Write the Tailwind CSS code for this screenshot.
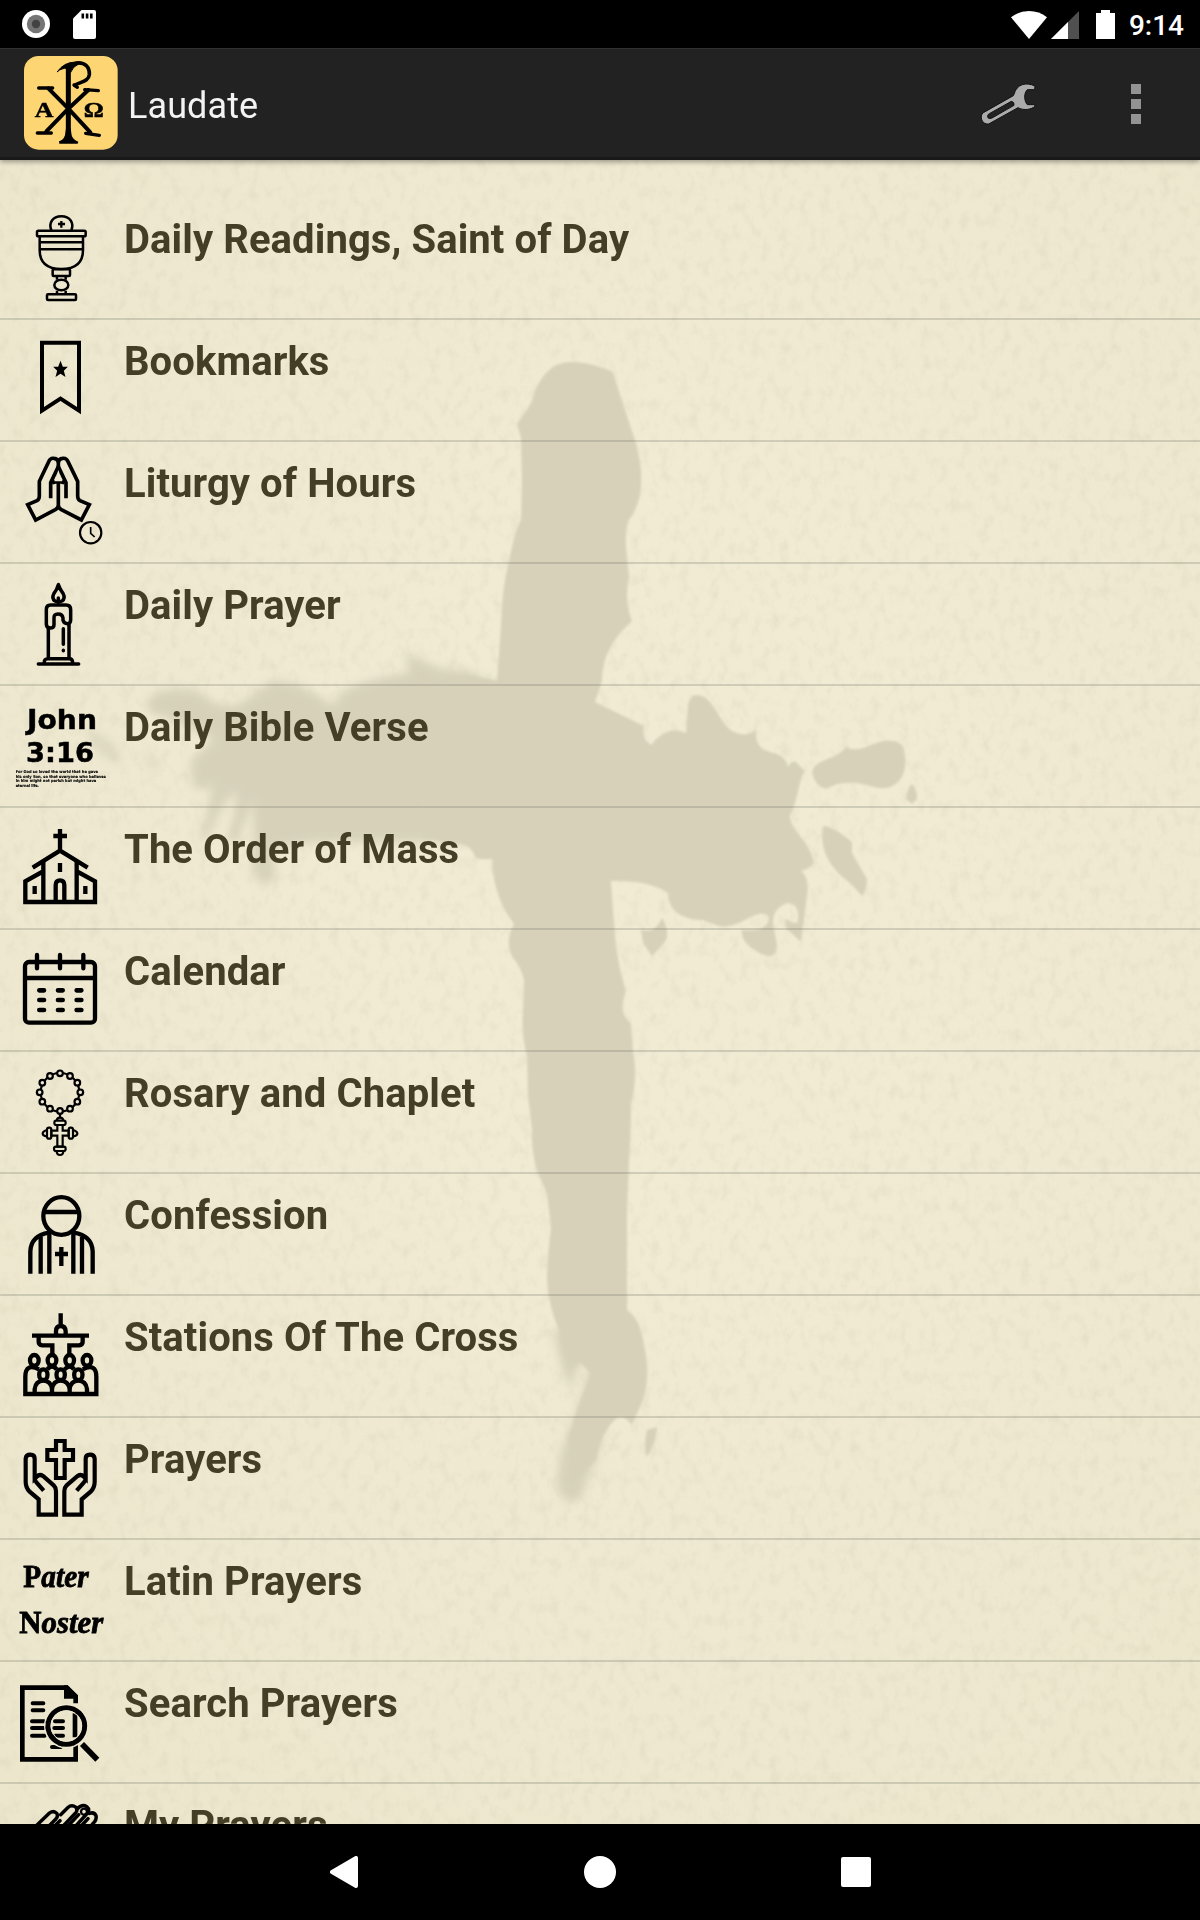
<!DOCTYPE html>
<html lang="en">
<head>
    <meta charset="UTF-8">
    <meta name="viewport" content="width=device-width, initial-scale=1.0">
    <title>Laudate</title>
    <script src="https://cdn.jsdelivr.net/npm/@tailwindcss/browser@4"></script>
</head>
<body class="bg-black font-[Roboto,sans-serif]">
<div class="w-[1200px] h-[1920px] flex flex-col overflow-hidden">

    <!-- Status bar -->
    <div class="h-12 shrink-0 bg-black text-white flex items-center pl-[22px] pr-4">
        <svg class="w-7 h-7" viewBox="0 0 28 28"><circle cx="14" cy="14" r="14" fill="#fff"/><circle cx="14" cy="14" r="9.2" fill="#757575"/><circle cx="14" cy="14" r="4.2" fill="#424242"/></svg>
        <svg class="w-[23px] h-[29px] ml-[23px]" viewBox="0 0 23 29"><path d="M8.5 0H21q2 0 2 2v25q0 2-2 2H2q-2 0-2-2V8.500z" fill="#fff"/><path d="M8.500 3.500h2.600v5H8.500zM12.800 3.500h2.600v5h-2.600zM17 3.500h2.600v5H17z"/></svg>
        <div class="ml-auto flex items-center">
            <svg class="w-9 h-7 mt-px" viewBox="0 0 36 28"><path d="M0 6.300Q8 0 18 0t18 6.300L18 28z" fill="#fff"/></svg>
            <svg class="w-7 h-7 ml-1 mt-px" viewBox="0 0 28 28"><path d="M28 0v28H0z" fill="#505050"/><path d="M17 11v17H0z" fill="#fff"/></svg>
            <svg class="w-[19px] h-[29px] ml-[17px]" viewBox="0 0 19 29"><path d="M5 0h9v3h5v26H0V3h5z" fill="#fff"/></svg>
            <span class="ml-3.5 mt-[3px] text-[28px] leading-8 font-medium">9:14</span>
        </div>
    </div>

    <!-- Action bar -->
    <header class="relative z-10 h-28 shrink-0 bg-[#222] border-t border-t-[#303030] border-b-3 border-b-[#181818] shadow-[0_2px_5px_rgba(0,0,0,0.35)] flex items-center pl-6 pr-[59px]">
        <svg class="w-[94px] h-[94px]" viewBox="72 168 282 282">
            <rect x="72" y="168" width="281" height="281" rx="44" fill="#fdd673"/>
            <g fill="none" stroke="#000" stroke-linecap="round">
                <path d="M205 206V410" stroke-width="15"/>
                <path d="M180 209Q194 201 207 207L212 217Q219 199 236 192L228 186Q192 186 172 215z" fill="#000" stroke-width="3"/>
                <path d="M229 189C257 186 269 203 268 224C266 245 242 245 224 256" stroke-width="11"/>
                <path d="M222 255l10 7" stroke-width="10"/>
                <path d="M205 326L145 265M205 326L265 270" stroke-width="12"/>
                <path d="M205 326L139 394M205 326L271 397" stroke-width="12"/>
                <path d="M116 264h42M254 269l41 3" stroke-width="10"/>
                <path d="M112 399h42M257 400l41 6" stroke-width="10"/>
            </g>
            <path d="M198 385L195 406Q190 421 177 424L178 431H233L235 425Q218 419 215 406L212 385z"/>
            <text x="104" y="350" font-family="Liberation Serif, serif" font-weight="bold" font-size="66" textLength="56" lengthAdjust="spacingAndGlyphs" stroke="#000" stroke-width="1.500">A</text>
            <text x="251" y="350" font-family="Liberation Serif, serif" font-weight="bold" font-size="62" textLength="60" lengthAdjust="spacingAndGlyphs" stroke="#000" stroke-width="1.500">Ω</text>
        </svg>
        <h1 class="ml-[10px] mt-[5px] text-[36px] leading-[42px] tracking-[0.1px] text-[#f3f3f3]">Laudate</h1>
        <svg class="w-[57px] h-[45px] ml-auto mt-0.5" viewBox="240 245 171 135">
            <path d="M405 257C380 245 350 250 342 282L340 286L250 337C238 345 244 374 266 371L354 322C372 332 395 327 405 318L404 313H382C372 303 371 278 382 268H404z" fill="#ababab" stroke="#111" stroke-width="3"/>
            <path d="M334 303Q344 305 342 315L276 353Q262 358 263 346Q263 343 268 340z" fill="#222" stroke="#111" stroke-width="3"/>
        </svg>
        <div class="ml-[94px] mt-0.5 flex flex-col gap-[5px]">
            <span class="w-2.5 h-2.5 bg-[#939393]"></span>
            <span class="w-2.5 h-2.5 bg-[#939393]"></span>
            <span class="w-2.5 h-2.5 bg-[#939393]"></span>
        </div>
    </header>

    <main class="relative h-[1664px] shrink-0 overflow-hidden bg-[#efe9d1]">
        <!-- Paper with the painted cross -->
        <svg class="absolute inset-0 w-[1200px] h-[1664px]" viewBox="0 160 1200 1664">
            <defs>
                <radialGradient id="paper" cx="55%" cy="42%" r="75%">
                    <stop offset="0.3" stop-color="#f1ebd4"/>
                    <stop offset="1" stop-color="#ece6cd"/>
                </radialGradient>
                <filter id="grain" x="0" y="0" width="100%" height="100%">
                    <feTurbulence type="fractalNoise" baseFrequency="0.1 0.07" numOctaves="4" seed="7"/>
                    <feColorMatrix values="0 0 0 0 0.45  0 0 0 0 0.42  0 0 0 0 0.3  0.9 0 0 0 -0.42"/>
                </filter>
                <filter id="edge"><feGaussianBlur stdDeviation="1.2"/></filter>
                <filter id="smear" x="-20%" y="-20%" width="140%" height="140%"><feGaussianBlur stdDeviation="5"/></filter>
            </defs>
            <rect y="160" width="1200" height="1664" fill="url(#paper)"/>
            <rect y="160" width="1200" height="1664" filter="url(#grain)" opacity="0.36"/>
            <g fill="#d7d1ba">
                <g filter="url(#smear)">
                    <path d="M530 676L495 683L467 671L439 668L404 652L410 672L370 680L344 690L333 705L300 685L274 680L236 706L215 704Q195 684 165 690Q140 698 150 712Q180 722 214 738L190 762L194 790L212 786L207 815L199 838L206 840L226 800L236 790L234 815L228 840L238 842L252 800L254 840L252 870L262 886L276 878L272 848L316 842H530z"/>
                    <path d="M84 730Q118 735 122 764Q100 762 84 730z" opacity="0.7"/>
                    <path d="M140 752l22 10l-8 10z" opacity="0.6"/>
                    <path d="M553 1330L563 1372L572 1390L578 1364L592 1362L577 1412L560 1455L557 1490L567 1502L580 1500L595 1460L602 1439L600 1330z"/>
                </g>
                <g filter="url(#edge)">
                    <path d="M546 373Q556 361 574 362Q594 363 613 372L622 401L633 434Q639 450 641 471Q643 502 629 520Q625 530 626 547L629 577Q624 602 632 621C612 640 603 655 602 681L595 702L644 726Q641 738 651 745Q668 724 686 733L688 704Q692 690 706 698C718 709 722 726 734 732Q748 738 756 729Q754 748 770 752Q786 755 788 767Q793 758 798 764L805 771C797 783 800 795 790 816C791 832 808 838 814 862Q812 868 801 871Q810 878 807 896L801 942L787 929Q784 920 786 919Q794 925 798 922Q800 904 788 903Q772 908 773 924L777 944Q777 958 767 956C755 952 740 942 742 930Q768 932 769 918Q765 909 747 919Q727 930 716 925L703 920C684 920 668 912 668 893Q650 880 611 881L614 924Q617 965 626 990Q620 1010 625 1016L631 1024L633 1051Q638 1078 631 1104Q631 1135 629 1161L627 1210V1310Q640 1318 644 1345Q651 1375 643 1400L632 1425Q625 1415 617 1418Q600 1432 596 1460L580 1475L568 1440L577 1410L591 1374L580 1362L570 1368L557 1325Q547 1300 547 1275Q548 1250 551 1227L547 1194L537 1171Q531 1150 532 1130L528 1096L527 1055Q521 1035 523 1010L524 980Q521 967 513 958Q504 941 514 924L505 911Q492 885 492 859Q480 860 476 858Q471 846 462 844Q445 842 422 837V690L467 675L497 681L501 626Q502 590 508 565Q515 530 521 520L522 483L521 438L517 424Q527 410 532 401Q536 384 546 373z"/>
                    <path d="M812 773C814 758 834 762 846 747Q855 752 868 746C886 738 902 739 904 750Q909 772 897 783C880 796 868 781 849 783Q838 782 826 789Q815 786 812 773z"/>
                    <path d="M912 784Q918 792 917 799L912 804L906 799Q907 788 912 784z"/>
                    <path d="M823 826Q833 826 852 842V853L867 879Q867 890 862 896Q852 884 840 875Q818 853 823 826z"/>
                    <path d="M641 930Q655 934 662 918Q668 926 667 938Q664 944 652 956Q645 946 643 943z"/>
                    <path d="M647 1430L657 1427Q656 1443 647 1457Q643 1447 647 1430z"/>
                </g>
            </g>
        </svg>

        <ul class="relative pt-[38px] text-[40px] leading-[48px] tracking-[0.09px] font-bold text-[#453e26]">
            <li class="h-[122px] flex border-b-2 border-[#6b6f60]/25">
                <svg class="w-[120px] h-[120px] shrink-0" viewBox="0 24 360 360" fill="none" stroke="#000" stroke-width="7.500" stroke-linejoin="round">
                    <path d="M154 121C145 99 158 79 184 79S223 99 214 121"/>
                    <path d="M184 93v20M174 102h21" stroke-width="7"/>
                    <rect x="111" y="122" width="146" height="17" rx="4"/>
                    <path d="M119 140V180Q119 237 184 237T249 180V140M120 157H248M120 178H248"/>
                    <rect x="158" y="238" width="52" height="20" rx="3"/>
                    <path d="M171 259v10M197 259v10M171 302v10M197 302v10"/>
                    <ellipse cx="184" cy="285" rx="21" ry="16"/>
                    <rect x="141" y="313" width="87" height="17" rx="3"/>
                </svg>
                <span class="ml-1 mt-[18px]">Daily Readings, Saint of Day</span>
            </li>
            <li class="h-[122px] flex border-b-2 border-[#6b6f60]/25">
                <svg class="w-[120px] h-[120px] shrink-0" viewBox="0 390 360 360">
                    <path d="M126 458H237V662L181.500 626L126 662z" fill="none" stroke="#000" stroke-width="12"/>
                    <path d="M181.500 512l7 18h15l-12 12 5 19-15-10-15 10 5-19-12-12h15z"/>
                </svg>
                <span class="ml-1 mt-[18px]">Bookmarks</span>
            </li>
            <li class="h-[122px] flex border-b-2 border-[#6b6f60]/25">
                <svg class="w-[120px] h-[120px] shrink-0" viewBox="0 6 360 360" fill="none" stroke="#000" stroke-width="11">
                    <path d="M175 62V195Q175 204 166 209L107 240L83 194L111 182Q118 178 118 168V124L146 65Q151 53 162 55Q174 56 175 68Q176 56 188 55Q199 53 204 65L233 124V168Q233 178 240 182L268 194L244 240L184 209Q175 204 175 195"/>
                    <path d="M175 80L152 128V175M175 80L198 128V175M157 128Q175 122 193 128"/>
                    <path d="M175 90L163 124H187z" fill="#eee8d0" stroke="none"/>
                    <circle cx="272" cy="278" r="32" stroke-width="6.500"/>
                    <path d="M272 261V280L284 291" stroke-width="5"/>
                </svg>
                <span class="ml-1 mt-[18px]">Liturgy of Hours</span>
            </li>
            <li class="h-[122px] flex border-b-2 border-[#6b6f60]/25">
                <svg class="w-[120px] h-[120px] shrink-0" viewBox="0 372 360 360" fill="none" stroke="#000" stroke-width="10.500" stroke-linecap="round" stroke-linejoin="round">
                    <path d="M175 434Q171 449 162 460Q154 476 165 483Q175 488 186 483Q197 476 189 460Q180 449 175 434zM175 474v14"/>
                    <path d="M152 495H198Q212 495 212 509V540Q212 551 202 551T189 541V534Q187 522 174 522T162 534V554Q162 564 151 564T139 553V509Q139 495 152 495z"/>
                    <path d="M145 566V654M207 553V654M190 566V613M190 631v1M133 668Q132 656 144 656H208Q218 656 218 668M115 672H236"/>
                </svg>
                <span class="ml-1 mt-[18px]">Daily Prayer</span>
            </li>
            <li class="h-[122px] flex border-b-2 border-[#6b6f60]/25">
                <svg class="w-[120px] h-[120px] shrink-0" viewBox="0 18 360 360" font-family="DejaVu Sans, sans-serif" font-weight="bold">
                    <g font-size="81" stroke="#000" stroke-width="1.500">
                        <text x="81" y="146" textLength="210" lengthAdjust="spacingAndGlyphs">John</text>
                        <text x="78" y="245" textLength="204" lengthAdjust="spacingAndGlyphs">3:16</text>
                    </g>
                    <g font-size="11.500" stroke="#000" stroke-width="0.400">
                        <text x="47" y="280" textLength="247" lengthAdjust="spacingAndGlyphs">For God so loved the world that he gave</text>
                        <text x="47" y="294" textLength="271" lengthAdjust="spacingAndGlyphs">his only Son, so that everyone who believes</text>
                        <text x="47" y="307" textLength="242" lengthAdjust="spacingAndGlyphs">in him might not perish but might have</text>
                        <text x="47" y="321" textLength="70" lengthAdjust="spacingAndGlyphs">eternal life.</text>
                    </g>
                </svg>
                <span class="ml-1 mt-[18px]">Daily Bible Verse</span>
            </li>
            <li class="h-[122px] flex border-b-2 border-[#6b6f60]/25">
                <svg class="w-[120px] h-[120px] shrink-0" viewBox="0 384 360 360" fill="none" stroke="#000" stroke-width="13">
                    <path d="M180 447V512M160 468H201M98 563L180 512L263 563"/>
                    <path d="M130 543V666M230 543V666M126 576L76 604V666H285V604L234 576"/>
                    <path d="M167 664V616Q167 601 180 601T193 616V664M180 549V576M104 618V642M256 618V642"/>
                </svg>
                <span class="ml-1 mt-[18px]">The Order of Mass</span>
            </li>
            <li class="h-[122px] flex border-b-2 border-[#6b6f60]/25">
                <svg class="w-[120px] h-[120px] shrink-0" viewBox="0 0 360 360" fill="none" stroke="#000" stroke-width="13" stroke-linecap="round">
                    <rect x="75" y="96" width="210" height="182" rx="12"/>
                    <path d="M76 144H284M111 75V115M180 75V115M250 75V115"/>
                    <path d="M118 181h14M174 181h14M230 181h14M118 210h14M174 210h14M230 210h14M118 240h14M174 240h14M230 240h14" stroke-width="14"/>
                </svg>
                <span class="ml-1 mt-[18px]">Calendar</span>
            </li>
            <li class="h-[122px] flex border-b-2 border-[#6b6f60]/25">
                <svg class="w-[120px] h-[120px] shrink-0" viewBox="0 366 360 360" fill="none" stroke="#000" stroke-width="6.500">
                    <circle cx="180" cy="487" r="58"/>
                    <g fill="#eee8d0">
                        <circle cx="180" cy="430" r="8.500"/><circle cx="210" cy="438" r="8.500"/><circle cx="232" cy="458" r="8.500"/><circle cx="241" cy="487" r="8.500"/>
                        <circle cx="232" cy="515" r="8.500"/><circle cx="210" cy="536" r="8.500"/><circle cx="180" cy="543" r="8.500"/><circle cx="150" cy="536" r="8.500"/>
                        <circle cx="127" cy="515" r="8.500"/><circle cx="119" cy="487" r="8.500"/><circle cx="127" cy="458" r="8.500"/><circle cx="150" cy="438" r="8.500"/>
                    </g>
                    <path d="M180 552v12M170 572Q171 563 180 563T190 572"/>
                    <rect x="163" y="572" width="34" height="13" rx="6"/>
                    <path d="M172 586V602H154V617H172V650H188V617H206V602H188V586"/>
                    <rect x="141" y="593" width="13" height="33" rx="6"/><rect x="206" y="593" width="13" height="33" rx="6"/>
                    <path d="M141 600Q129 603 128 610T141 619M219 600Q231 603 232 610T219 619"/>
                    <rect x="162" y="650" width="35" height="13" rx="6"/>
                    <path d="M170 663Q170 675 180 675T190 663"/>
                </svg>
                <span class="ml-1 mt-[18px]">Rosary and Chaplet</span>
            </li>
            <li class="h-[122px] flex border-b-2 border-[#6b6f60]/25">
                <svg class="w-[120px] h-[120px] shrink-0" viewBox="0 12 360 360" fill="none" stroke="#000" stroke-width="13">
                    <ellipse cx="184" cy="138" rx="54" ry="56.500"/>
                    <path d="M131 126H237M91 311V244Q93 197 147 188M278 311V244Q276 197 221 188"/>
                    <path d="M122 200V311M148 185V311M220 185V311M246 200V311M184 231V288M165 252H204"/>
                </svg>
                <span class="ml-1 mt-[18px]">Confession</span>
            </li>
            <li class="h-[122px] flex border-b-2 border-[#6b6f60]/25">
                <svg class="w-[120px] h-[120px] shrink-0" viewBox="0 378 360 360" fill="none" stroke="#000" stroke-width="13">
                    <path d="M182 430V468M96 497H267M168 494V484Q168 468 182 468T197 484V494M116 503V515Q116 525 127 526H157V552M248 503V515Q248 525 237 526H208V552"/>
                    <ellipse cx="103" cy="571" rx="13" ry="16"/><ellipse cx="156" cy="571" rx="13" ry="16"/><ellipse cx="209" cy="571" rx="13" ry="16"/><ellipse cx="261" cy="571" rx="13" ry="16"/>
                    <ellipse cx="130" cy="614" rx="12.500" ry="16"/><ellipse cx="182" cy="614" rx="12.500" ry="16"/><ellipse cx="235" cy="614" rx="12.500" ry="16"/>
                    <path d="M117 598Q76 578 76 620V672H289V620Q289 578 248 598M142 598Q156 581 170 598M194 598Q209 581 222 598"/>
                    <path d="M104 668V658Q107 632 130 632T156 658V668V658Q159 632 182 632T209 658V668V658Q212 632 235 632T261 658V668"/>
                </svg>
                <span class="ml-1 mt-[18px]">Stations Of The Cross</span>
            </li>
            <li class="h-[122px] flex border-b-2 border-[#6b6f60]/25">
                <svg class="w-[120px] h-[120px] shrink-0" viewBox="0 24 360 360" fill="none" stroke="#000" stroke-width="12.500">
                    <path d="M168 93H194V120H219V150H194V204H168V150H142V120H168z"/>
                    <path d="M116 314H168V243Q168 233 161 226L129 198Q119 191 110 200L104 206V146Q104 134 91 134T77 146V215Q77 233 89 245L116 268zM104 204Q104 212 110 218L131 242"/>
                    <path d="M245 314H193V243Q193 233 200 226L233 198Q243 191 251 200L257 206V146Q257 134 270 134T284 146V215Q284 233 272 245L245 268zM257 204Q257 212 251 218L230 242"/>
                </svg>
                <span class="ml-1 mt-[18px]">Prayers</span>
            </li>
            <li class="h-[122px] flex border-b-2 border-[#6b6f60]/25">
                <svg class="w-[120px] h-[120px] shrink-0" viewBox="0 390 360 360" font-family="Liberation Serif, serif" font-size="96" stroke="#000" stroke-width="2.500">
                    <text x="70" y="532" textLength="196" lengthAdjust="spacingAndGlyphs">P<tspan font-style="italic">ater</tspan></text>
                    <text x="58" y="670" textLength="252" lengthAdjust="spacingAndGlyphs">N<tspan font-style="italic">oster</tspan></text>
                </svg>
                <span class="ml-1 mt-[18px]">Latin Prayers</span>
            </li>
            <li class="h-[122px] flex border-b-2 border-[#6b6f60]/25">
                <svg class="w-[120px] h-[120px] shrink-0" viewBox="0 36 360 360" fill="none" stroke="#000" stroke-width="14">
                    <path d="M227 160V140L200 113H67V328H227V284M225 190V262"/>
                    <path d="M192 106H203L234 136V146H192z" fill="#000" stroke="none"/>
                    <path d="M98 160H130M98 181H130M96 214H132M96 234H132M96 257H134M165 214H189M163 234H189M165 257H189M156 291H182" stroke-width="12" stroke-linecap="round"/>
                    <circle cx="199" cy="228" r="65" stroke="#eee8d0" stroke-width="4"/>
                    <circle cx="199" cy="228" r="55" stroke-width="15"/>
                    <circle cx="199" cy="228" r="46" stroke="#eee8d0" stroke-width="3"/>
                    <path d="M246 282L292 329" stroke-width="17"/>
                </svg>
                <span class="ml-1 mt-[18px]">Search Prayers</span>
            </li>
            <li class="h-[122px] flex">
                <svg class="w-[120px] h-[120px] shrink-0" viewBox="0 402 360 360" fill="none" stroke="#000" stroke-width="10.500" stroke-linecap="round">
                    <path d="M100 536L146 491Q160 479 171 491Q175 500 167 508L135 540"/>
                    <path d="M182 494L203 473Q215 462 228 472Q234 481 226 490L180 538M180 512L152 540"/>
                    <path d="M232 476Q247 461 260 470Q270 478 263 489L218 538M236 494L200 532"/>
                    <path d="M268 490Q283 485 288 497Q290 507 284 515L262 540M264 506L238 534"/>
                    <circle cx="252" cy="485" r="9" stroke-width="7"/>
                </svg>
                <span class="ml-1 mt-[18px]">My Prayers</span>
            </li>
        </ul>
    </main>

    <!-- Navigation bar -->
    <nav class="h-24 shrink-0 bg-black flex justify-center items-center">
        <div class="w-64 flex justify-center">
            <svg class="w-7 h-8" viewBox="0 0 28 32"><path d="M26 2V30L2 16z" fill="#fff" stroke="#fff" stroke-width="4" stroke-linejoin="round"/></svg>
        </div>
        <div class="w-64 flex justify-center"><span class="w-8 h-8 rounded-full bg-white"></span></div>
        <div class="w-64 flex justify-center"><span class="w-[30px] h-[30px] rounded-[2px] bg-white"></span></div>
    </nav>
</div>
</body>
</html>
